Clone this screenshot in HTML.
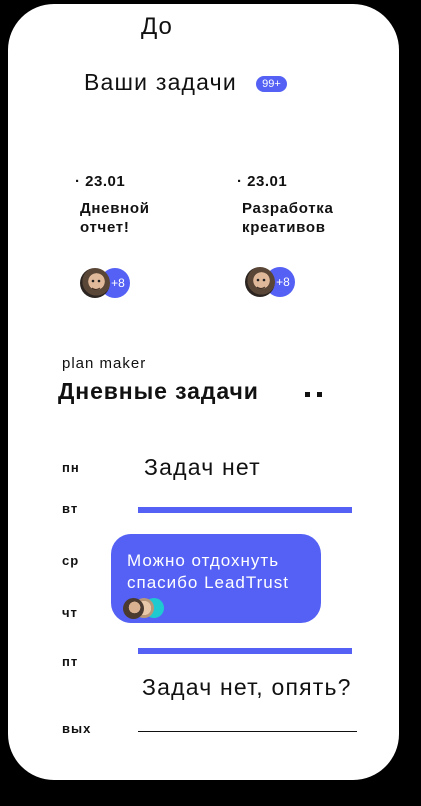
<!DOCTYPE html>
<html><head><meta charset="utf-8"><style>
*{margin:0;padding:0;box-sizing:border-box}
html,body{width:421px;height:806px;background:#000;overflow:hidden;font-family:"Liberation Sans",sans-serif;color:#111}
.card{position:absolute;left:8px;top:4px;width:391px;height:776px;background:#fff;border-radius:46px}
.t{position:absolute;white-space:nowrap;line-height:1}
.av{position:absolute;width:30px;height:30px;border-radius:50%;background:radial-gradient(circle at 55% 45%,#e0b89a 0 35%,#5a4636 36% 60%,#2b2420 61%)}
.pl{position:absolute;width:30px;height:30px;border-radius:50%;background:#5561f5;color:#fff;font-size:12px;display:flex;align-items:center;justify-content:center;padding-left:6px}
.d{font-size:13px;font-weight:bold;left:62px;letter-spacing:1px}
.bl{position:absolute;left:138px;width:214px;height:6px;background:#5561f5}
</style></head><body>
<div class="card"></div>
<div class="t" style="left:141px;top:15px;font-size:24px;letter-spacing:1px">До</div>
<div class="t" style="left:84px;top:71px;font-size:23px;letter-spacing:1.2px">Ваши задачи</div>
<div class="t" style="left:256px;top:76px;width:31px;height:16px;border-radius:8px;background:#5561f5;color:#fff;font-size:11px;display:flex;align-items:center;justify-content:center">99+</div>

<div class="t" style="left:75px;top:174px;font-size:15px;font-weight:bold;letter-spacing:0.5px">· 23.01</div>
<div class="t" style="left:80px;top:199px;font-size:15px;font-weight:bold;line-height:19px;letter-spacing:0.7px">Дневной<br>отчет!</div>
<div class="t" style="left:237px;top:174px;font-size:15px;font-weight:bold;letter-spacing:0.5px">· 23.01</div>
<div class="t" style="left:242px;top:199px;font-size:15px;font-weight:bold;line-height:19px;letter-spacing:0.7px">Разработка<br>креативов</div>

<div class="pl" style="left:100px;top:268px">+8</div>
<div class="av" style="left:80px;top:268px"></div>
<div class="pl" style="left:265px;top:267px">+8</div>
<div class="av" style="left:245px;top:267px"></div>

<div class="t" style="left:62px;top:356px;font-size:15px;letter-spacing:1px">plan maker</div>
<div class="t" style="left:58px;top:380px;font-size:23px;font-weight:900;letter-spacing:0.9px">Дневные задачи</div>
<div style="position:absolute;left:305px;top:392px;width:5px;height:5px;background:#111"></div>
<div style="position:absolute;left:317px;top:392px;width:5px;height:5px;background:#111"></div>

<div class="t d" style="top:461px">пн</div>
<div class="t d" style="top:502px">вт</div>
<div class="t d" style="top:554px">ср</div>
<div class="t d" style="top:606px">чт</div>
<div class="t d" style="top:655px">пт</div>
<div class="t d" style="top:722px">вых</div>

<div class="t" style="left:144px;top:456px;font-size:23px;letter-spacing:1.2px">Задач нет</div>
<div class="bl" style="top:507px"></div>

<div style="position:absolute;left:111px;top:534px;width:210px;height:89px;border-radius:20px;background:#5561f5"></div>
<div class="t" style="left:127px;top:550px;font-size:17px;color:#fff;line-height:22px;letter-spacing:1px">Можно отдохнуть<br>спасибо LeadTrust</div>
<div style="position:absolute;left:144px;top:598px;width:20px;height:20px;border-radius:50%;background:#1fc9d0"></div>
<div style="position:absolute;left:134px;top:598px;width:20px;height:20px;border-radius:50%;background:radial-gradient(circle,#e8c8a8 0 50%,#b89678 51%)"></div>
<div style="position:absolute;left:123px;top:598px;width:21px;height:21px;border-radius:50%;background:radial-gradient(circle at 55% 45%,#d9b090 0 35%,#4a3a30 36%)"></div>

<div class="bl" style="top:648px"></div>
<div class="t" style="left:142px;top:676px;font-size:23px;letter-spacing:1.2px">Задач нет, опять?</div>
<div style="position:absolute;left:138px;top:731px;width:219px;height:1px;background:#111"></div>
<svg style="position:absolute;left:80px;top:268px" width="30" height="30"><circle cx="13" cy="13" r="1.3" fill="#222"/><circle cx="19" cy="13" r="1.3" fill="#222"/><path d="M12 20 Q16 23 20 20" stroke="#3a2a20" fill="none"/></svg>
<svg style="position:absolute;left:245px;top:267px" width="30" height="30"><circle cx="13" cy="13" r="1.3" fill="#222"/><circle cx="19" cy="13" r="1.3" fill="#222"/><path d="M12 20 Q16 23 20 20" stroke="#3a2a20" fill="none"/></svg>
</body></html>
